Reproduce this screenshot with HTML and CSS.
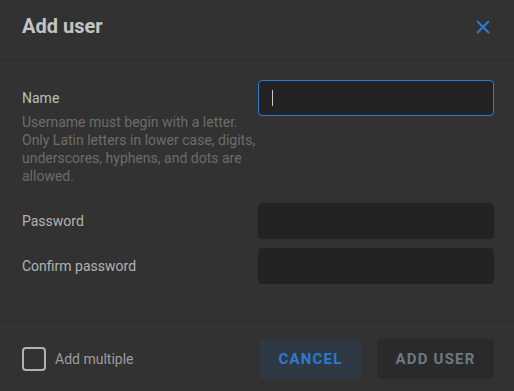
FILE: index.html
```html
<!DOCTYPE html>
<html lang="en">
<head>
    <meta charset="UTF-8">
    <meta name="viewport" content="width=device-width, initial-scale=1.0">
    <title>Add user</title>
    <link rel="stylesheet" href="styles.css">
</head>
<body>
    <div class="dialog">
        <div class="dialog-header">
            <h1 class="dialog-title">Add user</h1>
            <button class="close-btn" type="button" aria-label="Close">
                <svg width="14" height="14" viewBox="0 0 14 14">
                    <path d="M1 1 L13 13 M13 1 L1 13" stroke="#2a7bd4" stroke-width="2" fill="none"/>
                </svg>
            </button>
        </div>

        <form class="dialog-body">
            <div class="field-row">
                <div class="field-label">
                    <label for="username">Name</label>
                    <p class="helper">Username must begin with a letter. Only Latin letters in lower case, digits, underscores, hyphens, and dots are allowed.</p>
                </div>
                <div class="input-wrap">
                    <input type="text" id="username" class="text-input focused">
                    <span class="caret"></span>
                </div>
            </div>
            <div class="field-row row-password">
                <label class="field-label" for="password">Password</label>
                <input type="password" id="password" class="text-input">
            </div>
            <div class="field-row row-confirm">
                <label class="field-label" for="confirm">Confirm password</label>
                <input type="password" id="confirm" class="text-input">
            </div>
        </form>

        <div class="dialog-footer">
            <label class="check">
                <span class="check-box"></span>
                Add multiple
            </label>
            <div class="actions">
                <button type="button" class="btn btn-cancel">Cancel</button>
                <button type="button" class="btn btn-add">Add user</button>
            </div>
        </div>
    </div>
</body>
</html>
```

FILE: styles.css
```css
body {
    margin: 0;
    background: #323232;
    font-family: Roboto, "Liberation Sans", sans-serif;
}

.dialog {
    width: 514px;
    height: 391px;
    overflow: hidden;
}

.dialog-header {
    height: 60px;
    box-sizing: border-box;
    padding: 12px 22px 0 22px;
    display: flex;
    justify-content: space-between;
    align-items: flex-start;
    border-bottom: 1px solid #2a2a2a;
}

.dialog-title {
    margin: 0;
    font-size: 20px;
    line-height: 28px;
    font-weight: 700;
    color: #c4c4c4;
}

.close-btn {
    margin: 8px 2px 0 0;
    padding: 0;
    border: none;
    background: none;
    width: 14px;
    height: 14px;
    display: flex;
}

.dialog-body {
    margin: 0;
    padding: 20px 20px 37px 22px;
    border-bottom: 1px solid #2a2a2a;
}

.field-row {
    display: grid;
    grid-template-columns: 1fr 236px;
}

.row-password {
    margin-top: 18px;
}

.row-confirm {
    margin-top: 9px;
}

.field-label {
    font-size: 14px;
    line-height: 18px;
    color: #b3b3b3;
    align-self: center;
}

.field-row:first-child .field-label {
    align-self: start;
    padding-top: 9px;
    color: #bdbdbd;
}

.helper {
    margin: 6px 0 0 0;
    width: 234px;
    font-size: 14px;
    line-height: 18px;
    color: #6c6c6c;
}

.input-wrap {
    position: relative;
    height: 36px;
}

.text-input {
    width: 236px;
    height: 36px;
    box-sizing: border-box;
    border: 1px solid #232323;
    border-radius: 4px;
    background: #232323;
    padding: 0 13px;
    color: #c4c4c4;
    font-family: inherit;
    font-size: 14px;
    outline: none;
}

.text-input.focused {
    border-color: #2a7bd4;
}

.caret {
    position: absolute;
    left: 14px;
    top: 10px;
    width: 1px;
    height: 16px;
    background: #c8c8c8;
}

.dialog-footer {
    padding: 17px 20px 0 22px;
    display: flex;
    justify-content: space-between;
    align-items: center;
}

.check {
    display: flex;
    align-items: center;
    gap: 9px;
    font-size: 14px;
    color: #9c9c9c;
}

.check-box {
    width: 24px;
    height: 24px;
    box-sizing: border-box;
    border: 2px solid #aab3bc;
    border-radius: 4px;
}

.actions {
    display: flex;
    gap: 16px;
}

.btn {
    height: 40px;
    padding: 0 18px;
    border: none;
    border-radius: 4px;
    font-family: inherit;
    font-size: 15px;
    font-weight: 700;
    letter-spacing: 1.2px;
    text-transform: uppercase;
}

.btn-cancel {
    width: 101px;
    background: #2f3944;
    color: #2a7bd4;
}

.btn-add {
    width: 117px;
    background: #2a2a2a;
    color: #6b7886;
}
```
